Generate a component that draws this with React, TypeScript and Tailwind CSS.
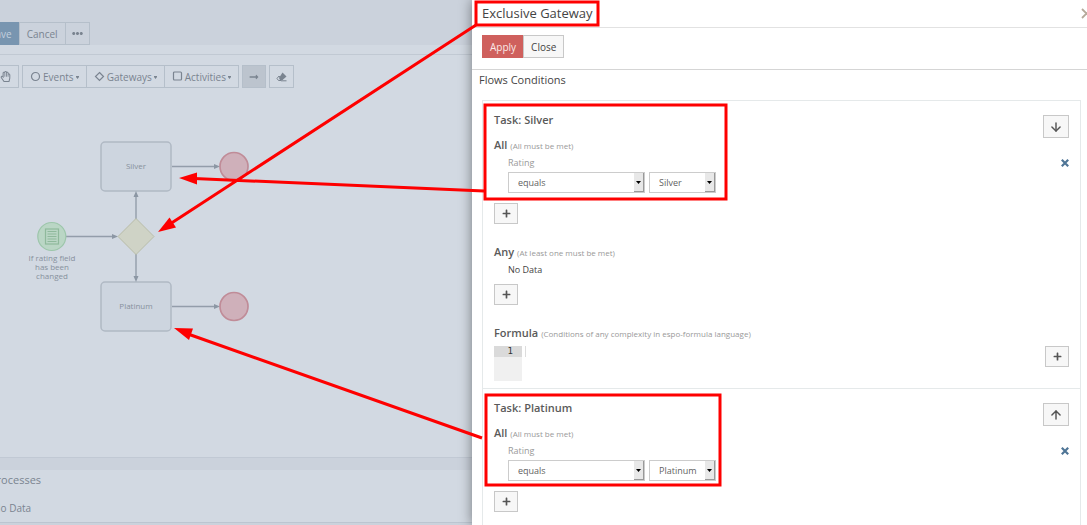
import type { ReactNode } from 'react';
import { FaEllipsisH, FaEraser, FaLongArrowAltRight, FaPlus, FaRegHandPaper } from 'react-icons/fa';
import { ArrowDown, ArrowUp } from 'lucide-react';

const toolButton = 'flex h-[23px] items-center justify-center border border-[#b5bfca]';
const panelButton = 'flex items-center justify-center border border-[#c8c8c8] bg-[#f7f7f7] text-[#555]';

function DropdownButton({ label, children }: { label: string; children: ReactNode }) {
  return (
    <button className={`${toolButton} -ml-px gap-[2px] px-[7px] first:ml-0`}>
      <svg width="11" height="11" viewBox="0 0 11 11" fill="none" stroke="currentColor" strokeWidth="1.2" className="mb-px">
        {children}
      </svg>
      <span className="pt-px">{label}</span>
      <svg width="3" height="3" viewBox="0 0 3 3" fill="currentColor" className="mt-px">
        <path d="M0 0h3v1L1.500 3L0 1z" />
      </svg>
    </button>
  );
}

function TaskBox({ y, label }: { y: number; label: string }) {
  return (
    <g>
      <rect x="101" y={y} width="70" height="49" rx="4" fill="#cdd5df" stroke="#b0b9c4" strokeWidth="1.5" />
      <text x="136" y={y + 27} textAnchor="middle">{label}</text>
      <path d={`M172 ${y + 24.5}h44`} stroke="#939daa" strokeWidth="1.3" />
      <path d={`M214 ${y + 22}l6 2.5l-6 2.5z`} fill="#8c97a4" />
      <circle cx="234" cy={y + 24.5} r="14" fill="#cfb0ba" stroke="#c08c98" strokeWidth="1.7" />
    </g>
  );
}

function Flowchart() {
  return (
    <svg
      width="472"
      height="369"
      viewBox="0 88 472 369"
      fontSize="8"
      fill="#87919d"
      className="block font-['Open_Sans',sans-serif]"
    >
      <TaskBox y={142} label="Silver" />
      <TaskBox y={282} label="Platinum" />

      <path d="M66 236.5h48M136 219v-24M136 254v24" fill="none" stroke="#939daa" strokeWidth="1.4" />
      <path d="M112 234l6 2.5l-6 2.5zM133.500 197l2.500-6l2.500 6zM133.500 276l2.500 6l2.500-6z" fill="#8c97a4" />
      <path d="M136 218.500l18 18l-18 18l-18-18z" fill="#cfd3c6" stroke="#b9bda9" />

      {/* Start event */}
      <circle cx="51.800" cy="236.500" r="14" fill="#bad6c5" stroke="#9dc6ab" strokeWidth="1.2" />
      <rect x="45.500" y="229" width="13" height="15" fill="none" stroke="#8fb99c" strokeWidth="1.2" />
      <path d="M47.500 231.500h9M47.500 234h9M47.500 236.500h9M47.500 239h9M47.500 241.500h9" stroke="#8fb99c" />
      <text textAnchor="middle">
        <tspan x="52" y="261">If rating field</tspan>
        <tspan x="52" y="270">has been</tspan>
        <tspan x="52" y="279">changed</tspan>
      </text>
    </svg>
  );
}

function Editor() {
  return (
    <main className="w-[472px] shrink-0 overflow-hidden bg-[#cbd2dc] text-[10px] text-[#7a8490]">
      <div className="-ml-[17px] flex pt-[22px]">
        <button className="h-[23px] bg-[#7895b0] px-[7px] pt-px text-[#c3d0de]">Save</button>
        <button className={`${toolButton} px-[7px] pt-px`}>Cancel</button>
        <button className={`${toolButton} -ml-px w-[25px]`} aria-label="More"><FaEllipsisH size={11} /></button>
      </div>

      <section className="border-b border-[#c1c9d4] bg-[#d2d9e2]">
        <div className="h-[10px] border-b border-[#c1c9d3]" />
        <div className="-ml-[8px] flex gap-[3px] pt-[10px]">
          <button className={`${toolButton} w-[27px]`} aria-label="Hand"><FaRegHandPaper size={11} /></button>
          <div className="flex">
            <DropdownButton label="Events"><circle cx="5.500" cy="5.500" r="4" /></DropdownButton>
            <DropdownButton label="Gateways"><path d="M5.500 1.500l4 4l-4 4l-4-4z" /></DropdownButton>
            <DropdownButton label="Activities"><rect x="1.500" y="1" width="8" height="8" rx="1" /></DropdownButton>
          </div>
          <button className={`${toolButton} w-6 border-[#a4adb8] bg-[#bcc4ce]`} aria-label="Connect"><FaLongArrowAltRight size={10} /></button>
          <button className={`${toolButton} w-[25px]`} aria-label="Eraser">
            <svg width="11" height="10" viewBox="0 0 11 10" fill="none" stroke="currentColor">
              <path d="M6.500 .5L10.500 4.500L6.500 8H4L3 6z" fill="currentColor" stroke="none" />
              <path d="M3 4L6 7.500L5 8.500H2.500L1 6.500zM5 8.800h5.500" />
            </svg>
          </button>
        </div>
        <Flowchart />
      </section>

      <section className="mt-3 border-b border-[#bcc5d0] bg-[#d2d9e2] pb-1">
        <h2 className="-ml-[10px] text-[11px] leading-5">Processes</h2>
        <p className="-ml-[7px] pt-2 leading-5">No Data</p>
      </section>
    </main>
  );
}

function Select({ label, value, width }: { label: string; value: string; width: string }) {
  return (
    <div className={`relative h-[21px] ${width}`}>
      <select
        aria-label={label}
        defaultValue={value}
        className="block h-full w-full appearance-none border border-[#ccc] bg-white pl-[9px] text-[9px] text-[#5f5f5f]"
      >
        <option>{value}</option>
      </select>
      <span className="pointer-events-none absolute top-px right-px flex h-[19px] w-[10px] items-center justify-center border-r border-b border-[#999] bg-[#e8e8e8]">
        <svg width="5" height="3" viewBox="0 0 5 3"><path d="M0 0h5L2.500 3z" fill="#000" /></svg>
      </span>
    </div>
  );
}

function GroupTitle({ title, hint }: { title: string; hint: string }) {
  return (
    <h4 className="text-[11px] leading-4 font-semibold text-[#5a5a5a]">
      {title} <span className="text-[8px] font-normal text-[#999]">{hint}</span>
    </h4>
  );
}

function PlusButton() {
  return (
    <button className={`${panelButton} h-[21px] w-6`} aria-label="Add"><FaPlus size={9} /></button>
  );
}

function FlowConditions({ task, direction }: { task: string; direction: 'up' | 'down' }) {
  const Arrow = direction === 'up' ? ArrowUp : ArrowDown;

  return (
    <section className="border-t border-[#e5e9ea] px-[11px] pt-[10px] pb-[7px]">
      <div className="flex h-[26px] items-start justify-between">
        <h3 className="text-[11px] leading-[18px] font-semibold text-[#5a5a5a]">Task: {task}</h3>
        <button className={`${panelButton} mt-1 h-[23px] w-[26px] shrink-0`} aria-label={`Move ${direction}`}>
          <Arrow size={14} strokeWidth={2.5} />
        </button>
      </div>

      <GroupTitle title="All" hint="(All must be met)" />
      <div className="flex items-start justify-between pl-[14px]">
        <div>
          <div className="text-[9px] leading-[18px] text-[#999]">Rating</div>
          <div className="flex gap-1">
            <Select label="Comparison" value="equals" width="w-[137px]" />
            <Select label="Rating" value={task} width="w-[67px]" />
          </div>
        </div>
        <button className="flex h-[18px] items-center text-[#4f7596]" aria-label="Remove">
          <svg width="8" height="8" viewBox="0 0 8 8" stroke="currentColor" strokeWidth="2.2">
            <path d="M.8 .8l6.400 6.400M7.200 .8L.8 7.200" />
          </svg>
        </button>
      </div>
      <div className="mt-[10px]"><PlusButton /></div>

      <div className="mt-5">
        <GroupTitle title="Any" hint="(At least one must be met)" />
        <p className="pl-[14px] text-[9px] leading-[18px]">No Data</p>
        <div className="mt-[5px]"><PlusButton /></div>
      </div>

      <div className="mt-5">
        <GroupTitle title="Formula" hint="(Conditions of any complexity in espo-formula language)" />
        <div className="mt-1 flex items-start justify-between">
          <div className="flex font-['DejaVu_Sans_Mono',monospace] text-[9px] leading-[11px]">
            <div className="h-[35px] w-7 bg-[#f0f0f0]">
              <div className="bg-[#dadada] pr-[9px] text-right text-[#333]">1</div>
            </div>
            <textarea aria-label="Formula" className="ml-[3px] h-[11px] w-40 resize-none border-l border-[#ddd] outline-none" />
          </div>
          <PlusButton />
        </div>
      </div>
    </section>
  );
}

function GatewayPanel() {
  return (
    <aside className="relative min-w-0 flex-1 bg-white text-[#444] shadow-[0_0_12px_rgba(0,0,0,0.45)]">
      <header className="flex h-7 items-center justify-between overflow-hidden border-b border-[#e2e2e2] pl-[10px]">
        <h1 className="text-[13px]">Exclusive Gateway</h1>
        <button className="-mr-[5px] text-[#b5a99a]" aria-label="Close">
          <svg width="11" height="11" viewBox="0 0 11 11" fill="none" stroke="currentColor" strokeWidth="1.8">
            <path d="M1 1l9 9M10 1l-9 9" />
          </svg>
        </button>
      </header>
      <div className="flex h-[42px] border-b border-[#d5d5d5] pt-[7px] pl-[10px] text-[10px]">
        <button className="h-[23px] bg-[#cf605d] px-2 pt-px text-[#fbe9e8]">Apply</button>
        <button className="-ml-px h-[23px] border border-[#c8c8c8] bg-[#f7f7f7] px-[7px] pt-px">Close</button>
      </div>
      <h2 className="pl-[7px] text-[11px] leading-5">Flows Conditions</h2>
      <div className="mt-[10px] mr-[6px] ml-[10px] border-x border-[#e5e9ea]">
        <FlowConditions task="Silver" direction="down" />
        <FlowConditions task="Platinum" direction="up" />
      </div>
    </aside>
  );
}

// Red boxes and arrows that tie the panel to the diagram
function Callouts() {
  return (
    <svg width="740" height="525" className="pointer-events-none absolute top-0 left-0" fill="none" stroke="#fe0000" strokeWidth="3">
      <rect x="476" y="2" width="122" height="23" />
      <rect x="485" y="105" width="241" height="94" />
      <rect x="486" y="395" width="234" height="90" />
      <path d="M476 25L170 224M484 191L194 178.500M482 438L188 334" />
      <g fill="#fe0000" stroke="none">
        <path d="M158 232L169.500 217.500L176 227.500z" />
        <path d="M179 178L197 172.500V184.500z" />
        <path d="M174 328L193 328.500L189 340z" />
      </g>
    </svg>
  );
}

export default function App() {
  return (
    <div className="relative flex h-screen overflow-hidden font-['Open_Sans',sans-serif]">
      <Editor />
      <GatewayPanel />
      <Callouts />
    </div>
  );
}
